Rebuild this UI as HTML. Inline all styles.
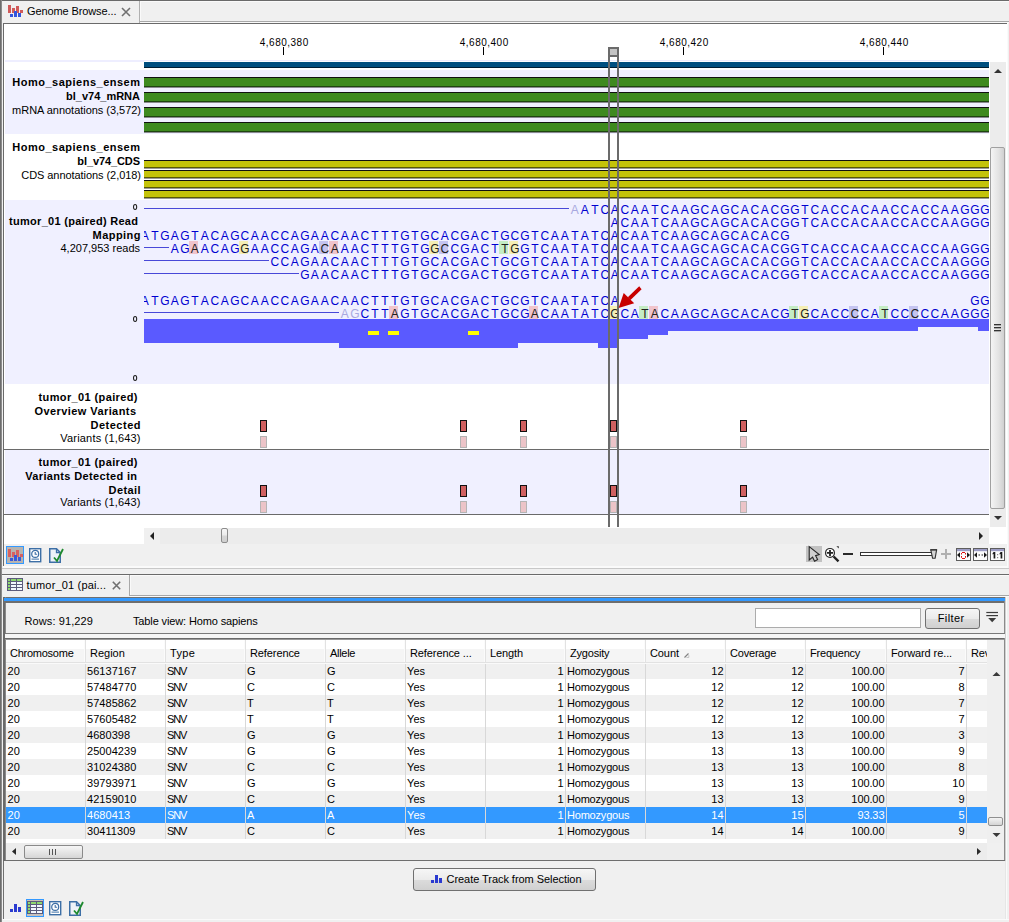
<!DOCTYPE html><html><head><meta charset="utf-8"><style>
html,body{margin:0;padding:0;}
body{width:1009px;height:922px;overflow:hidden;position:relative;background:#f0f0f0;font-family:"Liberation Sans",sans-serif;}
div{position:absolute;box-sizing:border-box;}
.t{white-space:nowrap;}
.b{width:12px;text-align:center;font-size:12px;line-height:12px;}
svg{position:absolute;}
</style></head><body>
<div style="left:0px;top:0px;width:1009px;height:1px;background:#6a6a6a"></div>
<div style="left:0px;top:0px;width:2px;height:922px;background:linear-gradient(90deg,#5e5e5e,#9a9a9a)"></div>
<div style="left:140px;top:1px;width:869px;height:1px;background:#fafafa"></div>
<div style="left:140px;top:1px;width:1px;height:21px;background:#fafafa"></div>
<div style="left:139px;top:1px;width:1px;height:22px;background:#b0b0b0"></div>
<div style="left:140px;top:21px;width:869px;height:1px;background:#a8a8a8"></div>
<div style="left:140px;top:22px;width:869px;height:1px;background:#fafafa"></div>
<svg style="left:8px;top:5px" width="16" height="13" viewBox="0 0 16 13"><rect x="0" y="0" width="3" height="8" fill="#d05a5a"/><rect x="4" y="3" width="3" height="5" fill="#d05a5a"/><rect x="8" y="1" width="3" height="7" fill="#d05a5a"/><rect x="12" y="5" width="3" height="3" fill="#d05a5a"/><rect x="2" y="9" width="3" height="3" fill="#3355dd"/><rect x="6" y="6" width="3" height="6" fill="#3355dd"/><rect x="10" y="8" width="3" height="4" fill="#3355dd"/></svg>
<div class="t" style="left:27px;top:0.19px;font-size:11px;line-height:22px;font-weight:normal;color:#000;letter-spacing:-0.11px;">Genome Browse...</div>
<svg style="left:121px;top:6.5px" width="10" height="10" viewBox="0 0 10 10"><path d="M1 1L9 9M9 1L1 9" stroke="#707070" stroke-width="1.6"/></svg>
<div style="left:3px;top:23px;width:1004px;height:1px;background:#6a6a6a"></div>
<div style="left:3px;top:23px;width:1px;height:544px;background:#6a6a6a"></div>
<div style="left:4px;top:24px;width:1003px;height:520px;background:#fff"></div>
<div style="left:1007px;top:22px;width:1px;height:546px;background:#fafafa"></div>
<div class="t" style="left:84.25px;width:400px;text-align:center;top:32.53px;font-size:10px;line-height:20px;font-weight:normal;color:#000;letter-spacing:0.5px;">4,680,380</div>
<div style="left:283px;top:47px;width:1px;height:8px;background:#000"></div>
<div class="t" style="left:284.25px;width:400px;text-align:center;top:32.53px;font-size:10px;line-height:20px;font-weight:normal;color:#000;letter-spacing:0.5px;">4,680,400</div>
<div style="left:483px;top:47px;width:1px;height:8px;background:#000"></div>
<div class="t" style="left:484.25px;width:400px;text-align:center;top:32.53px;font-size:10px;line-height:20px;font-weight:normal;color:#000;letter-spacing:0.5px;">4,680,420</div>
<div style="left:683px;top:47px;width:1px;height:8px;background:#000"></div>
<div class="t" style="left:684.25px;width:400px;text-align:center;top:32.53px;font-size:10px;line-height:20px;font-weight:normal;color:#000;letter-spacing:0.5px;">4,680,440</div>
<div style="left:883px;top:47px;width:1px;height:8px;background:#000"></div>
<div style="left:5px;top:60px;width:984px;height:1px;background:#eeeeff"></div>
<div style="left:5px;top:61px;width:139px;height:1px;background:#eeeeff"></div>
<div style="left:144px;top:62px;width:845px;height:5px;background:#004f80"></div>
<div style="left:144px;top:67px;width:845px;height:1px;background:#001e33"></div>
<div style="left:5px;top:70px;width:984px;height:64px;background:#f0f0ff"></div>
<div style="left:144px;top:77px;width:845px;height:1px;background:#111"></div>
<div style="left:144px;top:78px;width:845px;height:8px;background:#3e8a1f"></div>
<div style="left:144px;top:86px;width:845px;height:1px;background:#1e4510"></div>
<div style="left:144px;top:87px;width:845px;height:1px;background:#8a8a90"></div>
<div style="left:144px;top:92px;width:845px;height:1px;background:#111"></div>
<div style="left:144px;top:93px;width:845px;height:8px;background:#3e8a1f"></div>
<div style="left:144px;top:101px;width:845px;height:1px;background:#1e4510"></div>
<div style="left:144px;top:102px;width:845px;height:1px;background:#8a8a90"></div>
<div style="left:144px;top:107px;width:845px;height:1px;background:#111"></div>
<div style="left:144px;top:108px;width:845px;height:8px;background:#3e8a1f"></div>
<div style="left:144px;top:116px;width:845px;height:1px;background:#1e4510"></div>
<div style="left:144px;top:117px;width:845px;height:1px;background:#8a8a90"></div>
<div style="left:144px;top:122px;width:845px;height:1px;background:#111"></div>
<div style="left:144px;top:123px;width:845px;height:8px;background:#3e8a1f"></div>
<div style="left:144px;top:131px;width:845px;height:1px;background:#1e4510"></div>
<div style="left:144px;top:132px;width:845px;height:1px;background:#8a8a90"></div>
<div class="t" style="right:868.50px;top:70.69px;font-size:11px;line-height:22px;font-weight:bold;color:#000;text-align:right;letter-spacing:0.5px;">Homo_sapiens_ensem</div>
<div class="t" style="right:869.00px;top:84.69px;font-size:11px;line-height:22px;font-weight:bold;color:#000;text-align:right;">bl_v74_mRNA</div>
<div class="t" style="right:868.03px;top:98.69px;font-size:11px;line-height:22px;font-weight:normal;color:#000;text-align:right;letter-spacing:-0.03px;">mRNA annotations (3,572)</div>
<div style="left:144px;top:160px;width:845px;height:1px;background:#111"></div>
<div style="left:144px;top:161px;width:845px;height:6px;background:#c4c30a"></div>
<div style="left:144px;top:167px;width:845px;height:1px;background:#5a5a05"></div>
<div style="left:144px;top:168px;width:845px;height:1px;background:#9a9a9a"></div>
<div style="left:144px;top:170px;width:845px;height:1px;background:#111"></div>
<div style="left:144px;top:171px;width:845px;height:6px;background:#c4c30a"></div>
<div style="left:144px;top:177px;width:845px;height:1px;background:#5a5a05"></div>
<div style="left:144px;top:178px;width:845px;height:1px;background:#9a9a9a"></div>
<div style="left:144px;top:180px;width:845px;height:1px;background:#111"></div>
<div style="left:144px;top:181px;width:845px;height:6px;background:#c4c30a"></div>
<div style="left:144px;top:187px;width:845px;height:1px;background:#5a5a05"></div>
<div style="left:144px;top:188px;width:845px;height:1px;background:#9a9a9a"></div>
<div style="left:144px;top:190px;width:845px;height:1px;background:#111"></div>
<div style="left:144px;top:191px;width:845px;height:6px;background:#c4c30a"></div>
<div style="left:144px;top:197px;width:845px;height:1px;background:#5a5a05"></div>
<div style="left:144px;top:198px;width:845px;height:1px;background:#9a9a9a"></div>
<div class="t" style="right:868.50px;top:135.69px;font-size:11px;line-height:22px;font-weight:bold;color:#000;text-align:right;letter-spacing:0.5px;">Homo_sapiens_ensem</div>
<div class="t" style="right:869.10px;top:149.69px;font-size:11px;line-height:22px;font-weight:bold;color:#000;text-align:right;letter-spacing:-0.1px;">bl_v74_CDS</div>
<div class="t" style="right:868.06px;top:163.69px;font-size:11px;line-height:22px;font-weight:normal;color:#000;text-align:right;letter-spacing:-0.06px;">CDS annotations (2,018)</div>
<div style="left:5px;top:200px;width:984px;height:184px;background:#f0f0ff"></div>
<div class="t" style="right:870.71px;top:210.19px;font-size:11px;line-height:22px;font-weight:bold;color:#000;text-align:right;letter-spacing:0.29px;">tumor_01 (paired) Read</div>
<div class="t" style="right:868.05px;top:223.69px;font-size:11px;line-height:22px;font-weight:bold;color:#000;text-align:right;letter-spacing:0.45px;">Mapping</div>
<div class="t" style="right:869.00px;top:237.19px;font-size:11px;line-height:22px;font-weight:normal;color:#000;text-align:right;">4,207,953 reads</div>
<svg style="left:130px;top:202.2px" width="10" height="10" viewBox="130 202.2 10 10"><ellipse cx="135.1" cy="207.2" rx="1.6" ry="2.45" fill="none" stroke="#202020" stroke-width="1.05"/></svg>
<svg style="left:130px;top:314.2px" width="10" height="10" viewBox="130 314.2 10 10"><ellipse cx="135.1" cy="319.2" rx="1.6" ry="2.45" fill="none" stroke="#202020" stroke-width="1.05"/></svg>
<svg style="left:130px;top:373.2px" width="10" height="10" viewBox="130 373.2 10 10"><ellipse cx="135.1" cy="378.2" rx="1.6" ry="2.45" fill="none" stroke="#202020" stroke-width="1.05"/></svg>
<div style="left:0;top:0;width:989px;height:922px;overflow:hidden;clip-path:inset(0 0 0 144px)"><div style="left:144px;top:208px;width:425px;height:1px;background:#4848d8"></div><div class="b" style="left:568.8px;top:204px;color:#a8a8e0">A</div><div class="b" style="left:578.8px;top:204px;color:#0000d0">A</div><div class="b" style="left:588.8px;top:204px;color:#0000d0">T</div><div class="b" style="left:598.8px;top:204px;color:#0000d0">C</div><div class="b" style="left:608.8px;top:204px;color:#0000d0">A</div><div class="b" style="left:618.8px;top:204px;color:#0000d0">C</div><div class="b" style="left:628.8px;top:204px;color:#0000d0">A</div><div class="b" style="left:638.8px;top:204px;color:#0000d0">A</div><div class="b" style="left:648.8px;top:204px;color:#0000d0">T</div><div class="b" style="left:658.8px;top:204px;color:#0000d0">C</div><div class="b" style="left:668.8px;top:204px;color:#0000d0">A</div><div class="b" style="left:678.8px;top:204px;color:#0000d0">A</div><div class="b" style="left:688.8px;top:204px;color:#0000d0">G</div><div class="b" style="left:698.8px;top:204px;color:#0000d0">C</div><div class="b" style="left:708.8px;top:204px;color:#0000d0">A</div><div class="b" style="left:718.8px;top:204px;color:#0000d0">G</div><div class="b" style="left:728.8px;top:204px;color:#0000d0">C</div><div class="b" style="left:738.8px;top:204px;color:#0000d0">A</div><div class="b" style="left:748.8px;top:204px;color:#0000d0">C</div><div class="b" style="left:758.8px;top:204px;color:#0000d0">A</div><div class="b" style="left:768.8px;top:204px;color:#0000d0">C</div><div class="b" style="left:778.8px;top:204px;color:#0000d0">G</div><div class="b" style="left:788.8px;top:204px;color:#0000d0">G</div><div class="b" style="left:798.8px;top:204px;color:#0000d0">T</div><div class="b" style="left:808.8px;top:204px;color:#0000d0">C</div><div class="b" style="left:818.8px;top:204px;color:#0000d0">A</div><div class="b" style="left:828.8px;top:204px;color:#0000d0">C</div><div class="b" style="left:838.8px;top:204px;color:#0000d0">C</div><div class="b" style="left:848.8px;top:204px;color:#0000d0">A</div><div class="b" style="left:858.8px;top:204px;color:#0000d0">C</div><div class="b" style="left:868.8px;top:204px;color:#0000d0">A</div><div class="b" style="left:878.8px;top:204px;color:#0000d0">A</div><div class="b" style="left:888.8px;top:204px;color:#0000d0">C</div><div class="b" style="left:898.8px;top:204px;color:#0000d0">C</div><div class="b" style="left:908.8px;top:204px;color:#0000d0">A</div><div class="b" style="left:918.8px;top:204px;color:#0000d0">C</div><div class="b" style="left:928.8px;top:204px;color:#0000d0">C</div><div class="b" style="left:938.8px;top:204px;color:#0000d0">A</div><div class="b" style="left:948.8px;top:204px;color:#0000d0">A</div><div class="b" style="left:958.8px;top:204px;color:#0000d0">G</div><div class="b" style="left:968.8px;top:204px;color:#0000d0">G</div><div class="b" style="left:978.8px;top:204px;color:#0000d0">G</div><div class="b" style="left:608.8px;top:217px;color:#0000d0">A</div><div class="b" style="left:618.8px;top:217px;color:#0000d0">C</div><div class="b" style="left:628.8px;top:217px;color:#0000d0">A</div><div class="b" style="left:638.8px;top:217px;color:#0000d0">A</div><div class="b" style="left:648.8px;top:217px;color:#0000d0">T</div><div class="b" style="left:658.8px;top:217px;color:#0000d0">C</div><div class="b" style="left:668.8px;top:217px;color:#0000d0">A</div><div class="b" style="left:678.8px;top:217px;color:#0000d0">A</div><div class="b" style="left:688.8px;top:217px;color:#0000d0">G</div><div class="b" style="left:698.8px;top:217px;color:#0000d0">C</div><div class="b" style="left:708.8px;top:217px;color:#0000d0">A</div><div class="b" style="left:718.8px;top:217px;color:#0000d0">G</div><div class="b" style="left:728.8px;top:217px;color:#0000d0">C</div><div class="b" style="left:738.8px;top:217px;color:#0000d0">A</div><div class="b" style="left:748.8px;top:217px;color:#0000d0">C</div><div class="b" style="left:758.8px;top:217px;color:#0000d0">A</div><div class="b" style="left:768.8px;top:217px;color:#0000d0">C</div><div class="b" style="left:778.8px;top:217px;color:#0000d0">G</div><div class="b" style="left:788.8px;top:217px;color:#0000d0">G</div><div class="b" style="left:798.8px;top:217px;color:#0000d0">T</div><div class="b" style="left:808.8px;top:217px;color:#0000d0">C</div><div class="b" style="left:818.8px;top:217px;color:#0000d0">A</div><div class="b" style="left:828.8px;top:217px;color:#0000d0">C</div><div class="b" style="left:838.8px;top:217px;color:#0000d0">C</div><div class="b" style="left:848.8px;top:217px;color:#0000d0">A</div><div class="b" style="left:858.8px;top:217px;color:#0000d0">C</div><div class="b" style="left:868.8px;top:217px;color:#0000d0">A</div><div class="b" style="left:878.8px;top:217px;color:#0000d0">A</div><div class="b" style="left:888.8px;top:217px;color:#0000d0">C</div><div class="b" style="left:898.8px;top:217px;color:#0000d0">C</div><div class="b" style="left:908.8px;top:217px;color:#0000d0">A</div><div class="b" style="left:918.8px;top:217px;color:#0000d0">C</div><div class="b" style="left:928.8px;top:217px;color:#0000d0">C</div><div class="b" style="left:938.8px;top:217px;color:#0000d0">A</div><div class="b" style="left:948.8px;top:217px;color:#0000d0">A</div><div class="b" style="left:958.8px;top:217px;color:#0000d0">G</div><div class="b" style="left:968.8px;top:217px;color:#0000d0">G</div><div class="b" style="left:978.8px;top:217px;color:#0000d0">G</div><div class="b" style="left:138.8px;top:230px;color:#0000d0">A</div><div class="b" style="left:148.8px;top:230px;color:#0000d0">T</div><div class="b" style="left:158.8px;top:230px;color:#0000d0">G</div><div class="b" style="left:168.8px;top:230px;color:#0000d0">A</div><div class="b" style="left:178.8px;top:230px;color:#0000d0">G</div><div class="b" style="left:188.8px;top:230px;color:#0000d0">T</div><div class="b" style="left:198.8px;top:230px;color:#0000d0">A</div><div class="b" style="left:208.8px;top:230px;color:#0000d0">C</div><div class="b" style="left:218.8px;top:230px;color:#0000d0">A</div><div class="b" style="left:228.8px;top:230px;color:#0000d0">G</div><div class="b" style="left:238.8px;top:230px;color:#0000d0">C</div><div class="b" style="left:248.8px;top:230px;color:#0000d0">A</div><div class="b" style="left:258.8px;top:230px;color:#0000d0">A</div><div class="b" style="left:268.8px;top:230px;color:#0000d0">C</div><div class="b" style="left:278.8px;top:230px;color:#0000d0">C</div><div class="b" style="left:288.8px;top:230px;color:#0000d0">A</div><div class="b" style="left:298.8px;top:230px;color:#0000d0">G</div><div class="b" style="left:308.8px;top:230px;color:#0000d0">A</div><div class="b" style="left:318.8px;top:230px;color:#0000d0">A</div><div class="b" style="left:328.8px;top:230px;color:#0000d0">C</div><div class="b" style="left:338.8px;top:230px;color:#0000d0">A</div><div class="b" style="left:348.8px;top:230px;color:#0000d0">A</div><div class="b" style="left:358.8px;top:230px;color:#0000d0">C</div><div class="b" style="left:368.8px;top:230px;color:#0000d0">T</div><div class="b" style="left:378.8px;top:230px;color:#0000d0">T</div><div class="b" style="left:388.8px;top:230px;color:#0000d0">T</div><div class="b" style="left:398.8px;top:230px;color:#0000d0">G</div><div class="b" style="left:408.8px;top:230px;color:#0000d0">T</div><div class="b" style="left:418.8px;top:230px;color:#0000d0">G</div><div class="b" style="left:428.8px;top:230px;color:#0000d0">C</div><div class="b" style="left:438.8px;top:230px;color:#0000d0">A</div><div class="b" style="left:448.8px;top:230px;color:#0000d0">C</div><div class="b" style="left:458.8px;top:230px;color:#0000d0">G</div><div class="b" style="left:468.8px;top:230px;color:#0000d0">A</div><div class="b" style="left:478.8px;top:230px;color:#0000d0">C</div><div class="b" style="left:488.8px;top:230px;color:#0000d0">T</div><div class="b" style="left:498.8px;top:230px;color:#0000d0">G</div><div class="b" style="left:508.8px;top:230px;color:#0000d0">C</div><div class="b" style="left:518.8px;top:230px;color:#0000d0">G</div><div class="b" style="left:528.8px;top:230px;color:#0000d0">T</div><div class="b" style="left:538.8px;top:230px;color:#0000d0">C</div><div class="b" style="left:548.8px;top:230px;color:#0000d0">A</div><div class="b" style="left:558.8px;top:230px;color:#0000d0">A</div><div class="b" style="left:568.8px;top:230px;color:#0000d0">T</div><div class="b" style="left:578.8px;top:230px;color:#0000d0">A</div><div class="b" style="left:588.8px;top:230px;color:#0000d0">T</div><div class="b" style="left:598.8px;top:230px;color:#0000d0">C</div><div class="b" style="left:608.8px;top:230px;color:#0000d0">A</div><div class="b" style="left:618.8px;top:230px;color:#0000d0">C</div><div class="b" style="left:628.8px;top:230px;color:#0000d0">A</div><div class="b" style="left:638.8px;top:230px;color:#0000d0">A</div><div class="b" style="left:648.8px;top:230px;color:#0000d0">T</div><div class="b" style="left:658.8px;top:230px;color:#0000d0">C</div><div class="b" style="left:668.8px;top:230px;color:#0000d0">A</div><div class="b" style="left:678.8px;top:230px;color:#0000d0">A</div><div class="b" style="left:688.8px;top:230px;color:#0000d0">G</div><div class="b" style="left:698.8px;top:230px;color:#0000d0">C</div><div class="b" style="left:708.8px;top:230px;color:#0000d0">A</div><div class="b" style="left:718.8px;top:230px;color:#0000d0">G</div><div class="b" style="left:728.8px;top:230px;color:#0000d0">C</div><div class="b" style="left:738.8px;top:230px;color:#0000d0">A</div><div class="b" style="left:748.8px;top:230px;color:#0000d0">C</div><div class="b" style="left:758.8px;top:230px;color:#0000d0">A</div><div class="b" style="left:768.8px;top:230px;color:#0000d0">C</div><div class="b" style="left:778.8px;top:230px;color:#0000d0">G</div><div style="left:144px;top:247px;width:25px;height:1px;background:#4848d8"></div><div class="b" style="left:168.8px;top:243px;color:#0000d0">A</div><div class="b" style="left:178.8px;top:243px;color:#0000d0">G</div><div style="left:189px;top:241px;width:9px;height:13px;background:#f0c4cc"></div><div class="b" style="left:188.8px;top:243px;color:#202020">A</div><div class="b" style="left:198.8px;top:243px;color:#0000d0">A</div><div class="b" style="left:208.8px;top:243px;color:#0000d0">C</div><div class="b" style="left:218.8px;top:243px;color:#0000d0">A</div><div class="b" style="left:228.8px;top:243px;color:#0000d0">G</div><div style="left:239px;top:241px;width:9px;height:13px;background:#f4eeb4"></div><div class="b" style="left:238.8px;top:243px;color:#202020">G</div><div class="b" style="left:248.8px;top:243px;color:#0000d0">A</div><div class="b" style="left:258.8px;top:243px;color:#0000d0">A</div><div class="b" style="left:268.8px;top:243px;color:#0000d0">C</div><div class="b" style="left:278.8px;top:243px;color:#0000d0">C</div><div class="b" style="left:288.8px;top:243px;color:#0000d0">A</div><div class="b" style="left:298.8px;top:243px;color:#0000d0">G</div><div class="b" style="left:308.8px;top:243px;color:#0000d0">A</div><div style="left:319px;top:241px;width:9px;height:13px;background:#c4c4f0"></div><div class="b" style="left:318.8px;top:243px;color:#202020">C</div><div style="left:329px;top:241px;width:9px;height:13px;background:#f0c4cc"></div><div class="b" style="left:328.8px;top:243px;color:#202020">A</div><div class="b" style="left:338.8px;top:243px;color:#0000d0">A</div><div class="b" style="left:348.8px;top:243px;color:#0000d0">A</div><div class="b" style="left:358.8px;top:243px;color:#0000d0">C</div><div class="b" style="left:368.8px;top:243px;color:#0000d0">T</div><div class="b" style="left:378.8px;top:243px;color:#0000d0">T</div><div class="b" style="left:388.8px;top:243px;color:#0000d0">T</div><div class="b" style="left:398.8px;top:243px;color:#0000d0">G</div><div class="b" style="left:408.8px;top:243px;color:#0000d0">T</div><div class="b" style="left:418.8px;top:243px;color:#0000d0">G</div><div style="left:429px;top:241px;width:9px;height:13px;background:#f4eeb4"></div><div class="b" style="left:428.8px;top:243px;color:#202020">G</div><div style="left:439px;top:241px;width:9px;height:13px;background:#c4c4f0"></div><div class="b" style="left:438.8px;top:243px;color:#202020">C</div><div class="b" style="left:448.8px;top:243px;color:#0000d0">C</div><div class="b" style="left:458.8px;top:243px;color:#0000d0">G</div><div class="b" style="left:468.8px;top:243px;color:#0000d0">A</div><div class="b" style="left:478.8px;top:243px;color:#0000d0">C</div><div class="b" style="left:488.8px;top:243px;color:#0000d0">T</div><div style="left:499px;top:241px;width:9px;height:13px;background:#c4ecc4"></div><div class="b" style="left:498.8px;top:243px;color:#202020">T</div><div style="left:509px;top:241px;width:9px;height:13px;background:#f4eeb4"></div><div class="b" style="left:508.8px;top:243px;color:#202020">G</div><div class="b" style="left:518.8px;top:243px;color:#0000d0">G</div><div class="b" style="left:528.8px;top:243px;color:#0000d0">T</div><div class="b" style="left:538.8px;top:243px;color:#0000d0">C</div><div class="b" style="left:548.8px;top:243px;color:#0000d0">A</div><div class="b" style="left:558.8px;top:243px;color:#0000d0">A</div><div class="b" style="left:568.8px;top:243px;color:#0000d0">T</div><div class="b" style="left:578.8px;top:243px;color:#0000d0">A</div><div class="b" style="left:588.8px;top:243px;color:#0000d0">T</div><div class="b" style="left:598.8px;top:243px;color:#0000d0">C</div><div class="b" style="left:608.8px;top:243px;color:#0000d0">A</div><div class="b" style="left:618.8px;top:243px;color:#0000d0">C</div><div class="b" style="left:628.8px;top:243px;color:#0000d0">A</div><div class="b" style="left:638.8px;top:243px;color:#0000d0">A</div><div class="b" style="left:648.8px;top:243px;color:#0000d0">T</div><div class="b" style="left:658.8px;top:243px;color:#0000d0">C</div><div class="b" style="left:668.8px;top:243px;color:#0000d0">A</div><div class="b" style="left:678.8px;top:243px;color:#0000d0">A</div><div class="b" style="left:688.8px;top:243px;color:#0000d0">G</div><div class="b" style="left:698.8px;top:243px;color:#0000d0">C</div><div class="b" style="left:708.8px;top:243px;color:#0000d0">A</div><div class="b" style="left:718.8px;top:243px;color:#0000d0">G</div><div class="b" style="left:728.8px;top:243px;color:#0000d0">C</div><div class="b" style="left:738.8px;top:243px;color:#0000d0">A</div><div class="b" style="left:748.8px;top:243px;color:#0000d0">C</div><div class="b" style="left:758.8px;top:243px;color:#0000d0">A</div><div class="b" style="left:768.8px;top:243px;color:#0000d0">C</div><div class="b" style="left:778.8px;top:243px;color:#0000d0">G</div><div class="b" style="left:788.8px;top:243px;color:#0000d0">G</div><div class="b" style="left:798.8px;top:243px;color:#0000d0">T</div><div class="b" style="left:808.8px;top:243px;color:#0000d0">C</div><div class="b" style="left:818.8px;top:243px;color:#0000d0">A</div><div class="b" style="left:828.8px;top:243px;color:#0000d0">C</div><div class="b" style="left:838.8px;top:243px;color:#0000d0">C</div><div class="b" style="left:848.8px;top:243px;color:#0000d0">A</div><div class="b" style="left:858.8px;top:243px;color:#0000d0">C</div><div class="b" style="left:868.8px;top:243px;color:#0000d0">A</div><div class="b" style="left:878.8px;top:243px;color:#0000d0">A</div><div class="b" style="left:888.8px;top:243px;color:#0000d0">C</div><div class="b" style="left:898.8px;top:243px;color:#0000d0">C</div><div class="b" style="left:908.8px;top:243px;color:#0000d0">A</div><div class="b" style="left:918.8px;top:243px;color:#0000d0">C</div><div class="b" style="left:928.8px;top:243px;color:#0000d0">C</div><div class="b" style="left:938.8px;top:243px;color:#0000d0">A</div><div class="b" style="left:948.8px;top:243px;color:#0000d0">A</div><div class="b" style="left:958.8px;top:243px;color:#0000d0">G</div><div class="b" style="left:968.8px;top:243px;color:#0000d0">G</div><div class="b" style="left:978.8px;top:243px;color:#0000d0">G</div><div style="left:144px;top:260px;width:125px;height:1px;background:#4848d8"></div><div class="b" style="left:268.8px;top:256px;color:#0000d0">C</div><div class="b" style="left:278.8px;top:256px;color:#0000d0">C</div><div class="b" style="left:288.8px;top:256px;color:#0000d0">A</div><div class="b" style="left:298.8px;top:256px;color:#0000d0">G</div><div class="b" style="left:308.8px;top:256px;color:#0000d0">A</div><div class="b" style="left:318.8px;top:256px;color:#0000d0">A</div><div class="b" style="left:328.8px;top:256px;color:#0000d0">C</div><div class="b" style="left:338.8px;top:256px;color:#0000d0">A</div><div class="b" style="left:348.8px;top:256px;color:#0000d0">A</div><div class="b" style="left:358.8px;top:256px;color:#0000d0">C</div><div class="b" style="left:368.8px;top:256px;color:#0000d0">T</div><div class="b" style="left:378.8px;top:256px;color:#0000d0">T</div><div class="b" style="left:388.8px;top:256px;color:#0000d0">T</div><div class="b" style="left:398.8px;top:256px;color:#0000d0">G</div><div class="b" style="left:408.8px;top:256px;color:#0000d0">T</div><div class="b" style="left:418.8px;top:256px;color:#0000d0">G</div><div class="b" style="left:428.8px;top:256px;color:#0000d0">C</div><div class="b" style="left:438.8px;top:256px;color:#0000d0">A</div><div class="b" style="left:448.8px;top:256px;color:#0000d0">C</div><div class="b" style="left:458.8px;top:256px;color:#0000d0">G</div><div class="b" style="left:468.8px;top:256px;color:#0000d0">A</div><div class="b" style="left:478.8px;top:256px;color:#0000d0">C</div><div class="b" style="left:488.8px;top:256px;color:#0000d0">T</div><div class="b" style="left:498.8px;top:256px;color:#0000d0">G</div><div class="b" style="left:508.8px;top:256px;color:#0000d0">C</div><div class="b" style="left:518.8px;top:256px;color:#0000d0">G</div><div class="b" style="left:528.8px;top:256px;color:#0000d0">T</div><div class="b" style="left:538.8px;top:256px;color:#0000d0">C</div><div class="b" style="left:548.8px;top:256px;color:#0000d0">A</div><div class="b" style="left:558.8px;top:256px;color:#0000d0">A</div><div class="b" style="left:568.8px;top:256px;color:#0000d0">T</div><div class="b" style="left:578.8px;top:256px;color:#0000d0">A</div><div class="b" style="left:588.8px;top:256px;color:#0000d0">T</div><div class="b" style="left:598.8px;top:256px;color:#0000d0">C</div><div class="b" style="left:608.8px;top:256px;color:#0000d0">A</div><div class="b" style="left:618.8px;top:256px;color:#0000d0">C</div><div class="b" style="left:628.8px;top:256px;color:#0000d0">A</div><div class="b" style="left:638.8px;top:256px;color:#0000d0">A</div><div class="b" style="left:648.8px;top:256px;color:#0000d0">T</div><div class="b" style="left:658.8px;top:256px;color:#0000d0">C</div><div class="b" style="left:668.8px;top:256px;color:#0000d0">A</div><div class="b" style="left:678.8px;top:256px;color:#0000d0">A</div><div class="b" style="left:688.8px;top:256px;color:#0000d0">G</div><div class="b" style="left:698.8px;top:256px;color:#0000d0">C</div><div class="b" style="left:708.8px;top:256px;color:#0000d0">A</div><div class="b" style="left:718.8px;top:256px;color:#0000d0">G</div><div class="b" style="left:728.8px;top:256px;color:#0000d0">C</div><div class="b" style="left:738.8px;top:256px;color:#0000d0">A</div><div class="b" style="left:748.8px;top:256px;color:#0000d0">C</div><div class="b" style="left:758.8px;top:256px;color:#0000d0">A</div><div class="b" style="left:768.8px;top:256px;color:#0000d0">C</div><div class="b" style="left:778.8px;top:256px;color:#0000d0">G</div><div class="b" style="left:788.8px;top:256px;color:#0000d0">G</div><div class="b" style="left:798.8px;top:256px;color:#0000d0">T</div><div class="b" style="left:808.8px;top:256px;color:#0000d0">C</div><div class="b" style="left:818.8px;top:256px;color:#0000d0">A</div><div class="b" style="left:828.8px;top:256px;color:#0000d0">C</div><div class="b" style="left:838.8px;top:256px;color:#0000d0">C</div><div class="b" style="left:848.8px;top:256px;color:#0000d0">A</div><div class="b" style="left:858.8px;top:256px;color:#0000d0">C</div><div class="b" style="left:868.8px;top:256px;color:#0000d0">A</div><div class="b" style="left:878.8px;top:256px;color:#0000d0">A</div><div class="b" style="left:888.8px;top:256px;color:#0000d0">C</div><div class="b" style="left:898.8px;top:256px;color:#0000d0">C</div><div class="b" style="left:908.8px;top:256px;color:#0000d0">A</div><div class="b" style="left:918.8px;top:256px;color:#0000d0">C</div><div class="b" style="left:928.8px;top:256px;color:#0000d0">C</div><div class="b" style="left:938.8px;top:256px;color:#0000d0">A</div><div class="b" style="left:948.8px;top:256px;color:#0000d0">A</div><div class="b" style="left:958.8px;top:256px;color:#0000d0">G</div><div class="b" style="left:968.8px;top:256px;color:#0000d0">G</div><div class="b" style="left:978.8px;top:256px;color:#0000d0">G</div><div style="left:144px;top:273px;width:155px;height:1px;background:#4848d8"></div><div class="b" style="left:298.8px;top:269px;color:#0000d0">G</div><div class="b" style="left:308.8px;top:269px;color:#0000d0">A</div><div class="b" style="left:318.8px;top:269px;color:#0000d0">A</div><div class="b" style="left:328.8px;top:269px;color:#0000d0">C</div><div class="b" style="left:338.8px;top:269px;color:#0000d0">A</div><div class="b" style="left:348.8px;top:269px;color:#0000d0">A</div><div class="b" style="left:358.8px;top:269px;color:#0000d0">C</div><div class="b" style="left:368.8px;top:269px;color:#0000d0">T</div><div class="b" style="left:378.8px;top:269px;color:#0000d0">T</div><div class="b" style="left:388.8px;top:269px;color:#0000d0">T</div><div class="b" style="left:398.8px;top:269px;color:#0000d0">G</div><div class="b" style="left:408.8px;top:269px;color:#0000d0">T</div><div class="b" style="left:418.8px;top:269px;color:#0000d0">G</div><div class="b" style="left:428.8px;top:269px;color:#0000d0">C</div><div class="b" style="left:438.8px;top:269px;color:#0000d0">A</div><div class="b" style="left:448.8px;top:269px;color:#0000d0">C</div><div class="b" style="left:458.8px;top:269px;color:#0000d0">G</div><div class="b" style="left:468.8px;top:269px;color:#0000d0">A</div><div class="b" style="left:478.8px;top:269px;color:#0000d0">C</div><div class="b" style="left:488.8px;top:269px;color:#0000d0">T</div><div class="b" style="left:498.8px;top:269px;color:#0000d0">G</div><div class="b" style="left:508.8px;top:269px;color:#0000d0">C</div><div class="b" style="left:518.8px;top:269px;color:#0000d0">G</div><div class="b" style="left:528.8px;top:269px;color:#0000d0">T</div><div class="b" style="left:538.8px;top:269px;color:#0000d0">C</div><div class="b" style="left:548.8px;top:269px;color:#0000d0">A</div><div class="b" style="left:558.8px;top:269px;color:#0000d0">A</div><div class="b" style="left:568.8px;top:269px;color:#0000d0">T</div><div class="b" style="left:578.8px;top:269px;color:#0000d0">A</div><div class="b" style="left:588.8px;top:269px;color:#0000d0">T</div><div class="b" style="left:598.8px;top:269px;color:#0000d0">C</div><div class="b" style="left:608.8px;top:269px;color:#0000d0">A</div><div class="b" style="left:618.8px;top:269px;color:#0000d0">C</div><div class="b" style="left:628.8px;top:269px;color:#0000d0">A</div><div class="b" style="left:638.8px;top:269px;color:#0000d0">A</div><div class="b" style="left:648.8px;top:269px;color:#0000d0">T</div><div class="b" style="left:658.8px;top:269px;color:#0000d0">C</div><div class="b" style="left:668.8px;top:269px;color:#0000d0">A</div><div class="b" style="left:678.8px;top:269px;color:#0000d0">A</div><div class="b" style="left:688.8px;top:269px;color:#0000d0">G</div><div class="b" style="left:698.8px;top:269px;color:#0000d0">C</div><div class="b" style="left:708.8px;top:269px;color:#0000d0">A</div><div class="b" style="left:718.8px;top:269px;color:#0000d0">G</div><div class="b" style="left:728.8px;top:269px;color:#0000d0">C</div><div class="b" style="left:738.8px;top:269px;color:#0000d0">A</div><div class="b" style="left:748.8px;top:269px;color:#0000d0">C</div><div class="b" style="left:758.8px;top:269px;color:#0000d0">A</div><div class="b" style="left:768.8px;top:269px;color:#0000d0">C</div><div class="b" style="left:778.8px;top:269px;color:#0000d0">G</div><div class="b" style="left:788.8px;top:269px;color:#0000d0">G</div><div class="b" style="left:798.8px;top:269px;color:#0000d0">T</div><div class="b" style="left:808.8px;top:269px;color:#0000d0">C</div><div class="b" style="left:818.8px;top:269px;color:#0000d0">A</div><div class="b" style="left:828.8px;top:269px;color:#0000d0">C</div><div class="b" style="left:838.8px;top:269px;color:#0000d0">C</div><div class="b" style="left:848.8px;top:269px;color:#0000d0">A</div><div class="b" style="left:858.8px;top:269px;color:#0000d0">C</div><div class="b" style="left:868.8px;top:269px;color:#0000d0">A</div><div class="b" style="left:878.8px;top:269px;color:#0000d0">A</div><div class="b" style="left:888.8px;top:269px;color:#0000d0">C</div><div class="b" style="left:898.8px;top:269px;color:#0000d0">C</div><div class="b" style="left:908.8px;top:269px;color:#0000d0">A</div><div class="b" style="left:918.8px;top:269px;color:#0000d0">C</div><div class="b" style="left:928.8px;top:269px;color:#0000d0">C</div><div class="b" style="left:938.8px;top:269px;color:#0000d0">A</div><div class="b" style="left:948.8px;top:269px;color:#0000d0">A</div><div class="b" style="left:958.8px;top:269px;color:#0000d0">G</div><div class="b" style="left:968.8px;top:269px;color:#0000d0">G</div><div class="b" style="left:978.8px;top:269px;color:#0000d0">G</div><div class="b" style="left:138.8px;top:295px;color:#0000d0">A</div><div class="b" style="left:148.8px;top:295px;color:#0000d0">T</div><div class="b" style="left:158.8px;top:295px;color:#0000d0">G</div><div class="b" style="left:168.8px;top:295px;color:#0000d0">A</div><div class="b" style="left:178.8px;top:295px;color:#0000d0">G</div><div class="b" style="left:188.8px;top:295px;color:#0000d0">T</div><div class="b" style="left:198.8px;top:295px;color:#0000d0">A</div><div class="b" style="left:208.8px;top:295px;color:#0000d0">C</div><div class="b" style="left:218.8px;top:295px;color:#0000d0">A</div><div class="b" style="left:228.8px;top:295px;color:#0000d0">G</div><div class="b" style="left:238.8px;top:295px;color:#0000d0">C</div><div class="b" style="left:248.8px;top:295px;color:#0000d0">A</div><div class="b" style="left:258.8px;top:295px;color:#0000d0">A</div><div class="b" style="left:268.8px;top:295px;color:#0000d0">C</div><div class="b" style="left:278.8px;top:295px;color:#0000d0">C</div><div class="b" style="left:288.8px;top:295px;color:#0000d0">A</div><div class="b" style="left:298.8px;top:295px;color:#0000d0">G</div><div class="b" style="left:308.8px;top:295px;color:#0000d0">A</div><div class="b" style="left:318.8px;top:295px;color:#0000d0">A</div><div class="b" style="left:328.8px;top:295px;color:#0000d0">C</div><div class="b" style="left:338.8px;top:295px;color:#0000d0">A</div><div class="b" style="left:348.8px;top:295px;color:#0000d0">A</div><div class="b" style="left:358.8px;top:295px;color:#0000d0">C</div><div class="b" style="left:368.8px;top:295px;color:#0000d0">T</div><div class="b" style="left:378.8px;top:295px;color:#0000d0">T</div><div class="b" style="left:388.8px;top:295px;color:#0000d0">T</div><div class="b" style="left:398.8px;top:295px;color:#0000d0">G</div><div class="b" style="left:408.8px;top:295px;color:#0000d0">T</div><div class="b" style="left:418.8px;top:295px;color:#0000d0">G</div><div class="b" style="left:428.8px;top:295px;color:#0000d0">C</div><div class="b" style="left:438.8px;top:295px;color:#0000d0">A</div><div class="b" style="left:448.8px;top:295px;color:#0000d0">C</div><div class="b" style="left:458.8px;top:295px;color:#0000d0">G</div><div class="b" style="left:468.8px;top:295px;color:#0000d0">A</div><div class="b" style="left:478.8px;top:295px;color:#0000d0">C</div><div class="b" style="left:488.8px;top:295px;color:#0000d0">T</div><div class="b" style="left:498.8px;top:295px;color:#0000d0">G</div><div class="b" style="left:508.8px;top:295px;color:#0000d0">C</div><div class="b" style="left:518.8px;top:295px;color:#0000d0">G</div><div class="b" style="left:528.8px;top:295px;color:#0000d0">T</div><div class="b" style="left:538.8px;top:295px;color:#0000d0">C</div><div class="b" style="left:548.8px;top:295px;color:#0000d0">A</div><div class="b" style="left:558.8px;top:295px;color:#0000d0">A</div><div class="b" style="left:568.8px;top:295px;color:#0000d0">T</div><div class="b" style="left:578.8px;top:295px;color:#0000d0">A</div><div class="b" style="left:588.8px;top:295px;color:#0000d0">T</div><div class="b" style="left:598.8px;top:295px;color:#0000d0">C</div><div class="b" style="left:608.8px;top:295px;color:#0000d0">A</div><div class="b" style="left:968.8px;top:295px;color:#0000d0">G</div><div class="b" style="left:978.8px;top:295px;color:#0000d0">G</div><div style="left:144px;top:312px;width:195px;height:1px;background:#4848d8"></div><div class="b" style="left:338.8px;top:308px;color:#a8a8e0">A</div><div class="b" style="left:348.8px;top:308px;color:#a8a8e0">G</div><div class="b" style="left:358.8px;top:308px;color:#0000d0">C</div><div class="b" style="left:368.8px;top:308px;color:#0000d0">T</div><div class="b" style="left:378.8px;top:308px;color:#0000d0">T</div><div style="left:389px;top:306px;width:9px;height:13px;background:#f0c4cc"></div><div class="b" style="left:388.8px;top:308px;color:#202020">A</div><div class="b" style="left:398.8px;top:308px;color:#0000d0">G</div><div class="b" style="left:408.8px;top:308px;color:#0000d0">T</div><div class="b" style="left:418.8px;top:308px;color:#0000d0">G</div><div class="b" style="left:428.8px;top:308px;color:#0000d0">C</div><div class="b" style="left:438.8px;top:308px;color:#0000d0">A</div><div class="b" style="left:448.8px;top:308px;color:#0000d0">C</div><div class="b" style="left:458.8px;top:308px;color:#0000d0">G</div><div class="b" style="left:468.8px;top:308px;color:#0000d0">A</div><div class="b" style="left:478.8px;top:308px;color:#0000d0">C</div><div class="b" style="left:488.8px;top:308px;color:#0000d0">T</div><div class="b" style="left:498.8px;top:308px;color:#0000d0">G</div><div class="b" style="left:508.8px;top:308px;color:#0000d0">C</div><div class="b" style="left:518.8px;top:308px;color:#0000d0">G</div><div style="left:529px;top:306px;width:9px;height:13px;background:#f0c4cc"></div><div class="b" style="left:528.8px;top:308px;color:#202020">A</div><div class="b" style="left:538.8px;top:308px;color:#0000d0">C</div><div class="b" style="left:548.8px;top:308px;color:#0000d0">A</div><div class="b" style="left:558.8px;top:308px;color:#0000d0">A</div><div class="b" style="left:568.8px;top:308px;color:#0000d0">T</div><div class="b" style="left:578.8px;top:308px;color:#0000d0">A</div><div class="b" style="left:588.8px;top:308px;color:#0000d0">T</div><div class="b" style="left:598.8px;top:308px;color:#0000d0">C</div><div style="left:609px;top:306px;width:9px;height:13px;background:#f4eeb4"></div><div class="b" style="left:608.8px;top:308px;color:#202020">G</div><div class="b" style="left:618.8px;top:308px;color:#0000d0">C</div><div class="b" style="left:628.8px;top:308px;color:#0000d0">A</div><div style="left:639px;top:306px;width:9px;height:13px;background:#c4ecc4"></div><div class="b" style="left:638.8px;top:308px;color:#202020">T</div><div style="left:649px;top:306px;width:9px;height:13px;background:#f0c4cc"></div><div class="b" style="left:648.8px;top:308px;color:#202020">A</div><div class="b" style="left:658.8px;top:308px;color:#0000d0">C</div><div class="b" style="left:668.8px;top:308px;color:#0000d0">A</div><div class="b" style="left:678.8px;top:308px;color:#0000d0">A</div><div class="b" style="left:688.8px;top:308px;color:#0000d0">G</div><div class="b" style="left:698.8px;top:308px;color:#0000d0">C</div><div class="b" style="left:708.8px;top:308px;color:#0000d0">A</div><div class="b" style="left:718.8px;top:308px;color:#0000d0">G</div><div class="b" style="left:728.8px;top:308px;color:#0000d0">C</div><div class="b" style="left:738.8px;top:308px;color:#0000d0">A</div><div class="b" style="left:748.8px;top:308px;color:#0000d0">C</div><div class="b" style="left:758.8px;top:308px;color:#0000d0">A</div><div class="b" style="left:768.8px;top:308px;color:#0000d0">C</div><div class="b" style="left:778.8px;top:308px;color:#0000d0">G</div><div style="left:789px;top:306px;width:9px;height:13px;background:#c4ecc4"></div><div class="b" style="left:788.8px;top:308px;color:#202020">T</div><div style="left:799px;top:306px;width:9px;height:13px;background:#f4eeb4"></div><div class="b" style="left:798.8px;top:308px;color:#202020">G</div><div class="b" style="left:808.8px;top:308px;color:#0000d0">C</div><div class="b" style="left:818.8px;top:308px;color:#0000d0">A</div><div class="b" style="left:828.8px;top:308px;color:#0000d0">C</div><div class="b" style="left:838.8px;top:308px;color:#0000d0">C</div><div style="left:849px;top:306px;width:9px;height:13px;background:#c4c4f0"></div><div class="b" style="left:848.8px;top:308px;color:#202020">C</div><div class="b" style="left:858.8px;top:308px;color:#0000d0">C</div><div class="b" style="left:868.8px;top:308px;color:#0000d0">A</div><div style="left:879px;top:306px;width:9px;height:13px;background:#c4ecc4"></div><div class="b" style="left:878.8px;top:308px;color:#202020">T</div><div class="b" style="left:888.8px;top:308px;color:#0000d0">C</div><div class="b" style="left:898.8px;top:308px;color:#0000d0">C</div><div style="left:909px;top:306px;width:9px;height:13px;background:#c4c4f0"></div><div class="b" style="left:908.8px;top:308px;color:#202020">C</div><div class="b" style="left:918.8px;top:308px;color:#0000d0">C</div><div class="b" style="left:928.8px;top:308px;color:#0000d0">C</div><div class="b" style="left:938.8px;top:308px;color:#0000d0">A</div><div class="b" style="left:948.8px;top:308px;color:#0000d0">A</div><div class="b" style="left:958.8px;top:308px;color:#0000d0">G</div><div class="b" style="left:968.8px;top:308px;color:#0000d0">G</div><div class="b" style="left:978.8px;top:308px;color:#0000d0">G</div><div style="left:144px;top:319px;width:195px;height:24px;background:#5a5aff"></div><div style="left:339px;top:319px;width:179px;height:29px;background:#5a5aff"></div><div style="left:518px;top:319px;width:80px;height:24px;background:#5a5aff"></div><div style="left:598px;top:319px;width:20px;height:29px;background:#5a5aff"></div><div style="left:618px;top:319px;width:30px;height:20px;background:#5a5aff"></div><div style="left:648px;top:319px;width:20px;height:16px;background:#5a5aff"></div><div style="left:668px;top:319px;width:250px;height:12px;background:#5a5aff"></div><div style="left:918px;top:319px;width:60px;height:8px;background:#5a5aff"></div><div style="left:978px;top:319px;width:11px;height:12px;background:#5a5aff"></div><div style="left:368px;top:331px;width:11px;height:4px;background:#ffff00"></div><div style="left:388px;top:331px;width:11px;height:4px;background:#ffff00"></div><div style="left:468px;top:331px;width:11px;height:4px;background:#ffff00"></div></div>
<div class="t" style="right:871.12px;top:386.19px;font-size:11px;line-height:22px;font-weight:bold;color:#000;text-align:right;letter-spacing:0.38px;">tumor_01 (paired)</div>
<div class="t" style="right:872.58px;top:399.69px;font-size:11px;line-height:22px;font-weight:bold;color:#000;text-align:right;letter-spacing:0.42px;">Overview Variants</div>
<div class="t" style="right:868.00px;top:413.69px;font-size:11px;line-height:22px;font-weight:bold;color:#000;text-align:right;letter-spacing:0.5px;">Detected</div>
<div class="t" style="right:868.32px;top:426.69px;font-size:11px;line-height:22px;font-weight:normal;color:#000;text-align:right;letter-spacing:0.18px;">Variants (1,643)</div>
<div style="left:4px;top:449px;width:985px;height:1px;background:#6a6a6a"></div>
<div style="left:5px;top:450px;width:984px;height:64px;background:#f0f0ff"></div>
<div class="t" style="right:871.12px;top:451.19px;font-size:11px;line-height:22px;font-weight:bold;color:#000;text-align:right;letter-spacing:0.38px;">tumor_01 (paired)</div>
<div class="t" style="right:871.65px;top:464.69px;font-size:11px;line-height:22px;font-weight:bold;color:#000;text-align:right;letter-spacing:0.35px;">Variants Detected in</div>
<div class="t" style="right:868.10px;top:479.19px;font-size:11px;line-height:22px;font-weight:bold;color:#000;text-align:right;letter-spacing:0.4px;">Detail</div>
<div class="t" style="right:868.32px;top:491.19px;font-size:11px;line-height:22px;font-weight:normal;color:#000;text-align:right;letter-spacing:0.18px;">Variants (1,643)</div>
<div style="left:4px;top:514px;width:985px;height:1px;background:#6a6a6a"></div>
<div style="left:260px;top:420px;width:7px;height:12px;background:#d06060;border:1px solid #111"></div>
<div style="left:260px;top:436px;width:7px;height:12px;background:#ecc4c8;border:1px solid #b4b4b4"></div>
<div style="left:260px;top:485px;width:7px;height:12px;background:#d06060;border:1px solid #111"></div>
<div style="left:260px;top:501px;width:7px;height:12px;background:#ecc4c8;border:1px solid #b4b4b4"></div>
<div style="left:460px;top:420px;width:7px;height:12px;background:#d06060;border:1px solid #111"></div>
<div style="left:460px;top:436px;width:7px;height:12px;background:#ecc4c8;border:1px solid #b4b4b4"></div>
<div style="left:460px;top:485px;width:7px;height:12px;background:#d06060;border:1px solid #111"></div>
<div style="left:460px;top:501px;width:7px;height:12px;background:#ecc4c8;border:1px solid #b4b4b4"></div>
<div style="left:520px;top:420px;width:7px;height:12px;background:#d06060;border:1px solid #111"></div>
<div style="left:520px;top:436px;width:7px;height:12px;background:#ecc4c8;border:1px solid #b4b4b4"></div>
<div style="left:520px;top:485px;width:7px;height:12px;background:#d06060;border:1px solid #111"></div>
<div style="left:520px;top:501px;width:7px;height:12px;background:#ecc4c8;border:1px solid #b4b4b4"></div>
<div style="left:610px;top:420px;width:7px;height:12px;background:#d06060;border:1px solid #111"></div>
<div style="left:610px;top:436px;width:7px;height:12px;background:#ecc4c8;border:1px solid #b4b4b4"></div>
<div style="left:610px;top:485px;width:7px;height:12px;background:#d06060;border:1px solid #111"></div>
<div style="left:610px;top:501px;width:7px;height:12px;background:#ecc4c8;border:1px solid #b4b4b4"></div>
<div style="left:740px;top:420px;width:7px;height:12px;background:#d06060;border:1px solid #111"></div>
<div style="left:740px;top:436px;width:7px;height:12px;background:#ecc4c8;border:1px solid #b4b4b4"></div>
<div style="left:740px;top:485px;width:7px;height:12px;background:#d06060;border:1px solid #111"></div>
<div style="left:740px;top:501px;width:7px;height:12px;background:#ecc4c8;border:1px solid #b4b4b4"></div>
<div style="left:608px;top:47px;width:11px;height:10px;background:#c4c4c4;border:2px solid #6b6b6b"></div>
<div style="left:608px;top:56px;width:2px;height:471px;background:#6b6b6b"></div>
<div style="left:617px;top:56px;width:2px;height:471px;background:#6b6b6b"></div>
<svg style="left:600px;top:280px" width="50" height="40" viewBox="600 280 50 40"><path d="M639.2 286.3L641.6 289.2L630.5 300L627.8 297.2Z" fill="#c80000"/><path d="M623.7 292.9L634.2 303.2L618.6 307.9Z" fill="#c80000"/></svg>
<div style="left:990px;top:62px;width:16px;height:465px;background:#ececec"></div>
<svg style="left:993px;top:68px" width="10" height="6" viewBox="0 0 10 6"><path d="M1 5L5 1L9 5Z" fill="#333"/></svg>
<div style="left:990px;top:147px;width:15px;height:362px;background:linear-gradient(90deg,#f4f4f4,#e2e2e2 60%,#d0d0d0);border:1px solid #a0a0a0;border-radius:2px"></div>
<div style="left:994px;top:324px;width:7px;height:1px;background:#333"></div>
<div style="left:994px;top:325px;width:7px;height:1px;background:#a8a8a8"></div>
<div style="left:994px;top:327px;width:7px;height:1px;background:#333"></div>
<div style="left:994px;top:328px;width:7px;height:1px;background:#a8a8a8"></div>
<div style="left:994px;top:330px;width:7px;height:1px;background:#333"></div>
<div style="left:994px;top:331px;width:7px;height:1px;background:#a8a8a8"></div>
<svg style="left:993px;top:515px" width="10" height="6" viewBox="0 0 10 6"><path d="M1 1L5 5L9 1Z" fill="#333"/></svg>
<div style="left:144px;top:528px;width:845px;height:16px;background:#ececec"></div>
<div style="left:144px;top:528px;width:16px;height:16px;background:#f0f0f0"></div>
<svg style="left:149px;top:531px" width="6" height="10" viewBox="0 0 6 10"><path d="M5 1L1 5L5 9Z" fill="#222"/></svg>
<div style="left:221px;top:528px;width:7px;height:15px;background:linear-gradient(180deg,#f6f6f6 0%,#ececec 45%,#d6d6d6 55%,#cfcfcf 100%);border:1px solid #8c8c8c;border-radius:2px"></div>
<svg style="left:978px;top:531px" width="6" height="10" viewBox="0 0 6 10"><path d="M1 1L5 5L1 9Z" fill="#222"/></svg>
<div style="left:4px;top:544px;width:1003px;height:22px;background:#f0f0f0"></div>
<div style="left:3px;top:566px;width:1005px;height:2px;background:#fafafa"></div>
<div style="left:0px;top:568px;width:1009px;height:1px;background:#c8c8c8"></div>
<div style="left:6px;top:546px;width:18px;height:18px;background:#b8b4b0;border:1px solid #3399ff"></div><svg style="left:8px;top:549px" width="16" height="13" viewBox="0 0 16 13"><rect x="0" y="0" width="3" height="8" fill="#d86060"/><rect x="4" y="3" width="3" height="5" fill="#d86060"/><rect x="8" y="1" width="3" height="7" fill="#d86060"/><rect x="12" y="5" width="3" height="3" fill="#d86060"/><rect x="2" y="9" width="3" height="3" fill="#3a5ad8"/><rect x="6" y="6" width="3" height="6" fill="#3a5ad8"/><rect x="10" y="8" width="3" height="4" fill="#3a5ad8"/></svg><svg style="left:29px;top:548px" width="13" height="15" viewBox="0 0 13 15"><rect x="0.7" y="0.7" width="11" height="13" fill="#fff" stroke="#3d6fa6" stroke-width="1.4"/><circle cx="6.2" cy="5.9" r="3.5" fill="none" stroke="#3d6fa6" stroke-width="1.2"/><path d="M6.2 3.9V6.2H8.2" fill="none" stroke="#3d6fa6" stroke-width="1.1"/><rect x="2.5" y="10.6" width="7.5" height="1" fill="#3d6fa6"/></svg><svg style="left:49px;top:548px" width="15" height="15" viewBox="0 0 15 15"><path d="M0.75 0.75H7.5L11.25 4.5V14.25H0.75Z" fill="#eef2f8" stroke="#3d6fa6" stroke-width="1.5"/><path d="M7.5 0.75V4.5H11.25" fill="none" stroke="#3d6fa6" stroke-width="1.3"/><path d="M5 9.5L8 13L14 1" fill="none" stroke="#1e8a2e" stroke-width="1.8"/></svg><div style="left:806px;top:546px;width:16px;height:16px;background:#c2c2c2"></div><svg style="left:800px;top:540px" width="45" height="25" viewBox="800 540 45 25"><path d="M809.2 546.6L819.2 554.6L815.6 555.6L817.6 559.6L814.6 561.2L812.6 557.2L809.2 560Z" fill="#cfcfcf" stroke="#262626" stroke-width="1.1" stroke-linejoin="miter"/><circle cx="830" cy="552.9" r="4.4" fill="#fff" stroke="#222" stroke-width="1.2"/><path d="M827 552.9H833M830 549.9V555.9" stroke="#222" stroke-width="1.8"/><path d="M833.6 556.5L838.5 561.4" stroke="#222" stroke-width="2.4"/><path d="M836.4 546.2L838.8 546.2L838.8 548.6Z" fill="#333"/></svg><div style="left:843px;top:553px;width:10px;height:2px;background:#2a2a2a"></div><div style="left:860px;top:552px;width:74px;height:4px;background:#fff;border:1px solid #333"></div><svg style="left:920px;top:540px" width="20" height="25" viewBox="920 540 20 25"><path d="M930.8 549.8H936.6L935.1 558.3H932.6Z" fill="#d4d4d4" stroke="#333" stroke-width="1.1" stroke-linejoin="round"/><rect x="930.3" y="549.2" width="6.8" height="1.3" fill="#333"/></svg><div style="left:941px;top:553px;width:10px;height:2px;background:#b0b0b0"></div><div style="left:945px;top:549px;width:2px;height:10px;background:#b0b0b0"></div><div style="left:956px;top:548px;width:15px;height:13px;background:#fcfcfc;border:1px solid #5e5e5e"></div><div style="left:957px;top:549px;width:13px;height:2px;background:#9c9cc4"></div><div style="left:957px;top:551px;width:13px;height:1px;background:#e8e8f0"></div><div style="left:973px;top:548px;width:15px;height:13px;background:#fcfcfc;border:1px solid #5e5e5e"></div><div style="left:974px;top:549px;width:13px;height:2px;background:#9c9cc4"></div><div style="left:974px;top:551px;width:13px;height:1px;background:#e8e8f0"></div><div style="left:990px;top:548px;width:15px;height:13px;background:#fcfcfc;border:1px solid #5e5e5e"></div><div style="left:991px;top:549px;width:13px;height:2px;background:#9c9cc4"></div><div style="left:991px;top:551px;width:13px;height:1px;background:#e8e8f0"></div><svg style="left:950px;top:545px" width="59" height="20" viewBox="950 545 59 20"><path d="M957 555L960 552.2V557.8Z" fill="#1a1a1a"/><path d="M970 555L967 552.2V557.8Z" fill="#1a1a1a"/><path d="M962 552.5H965M962 558.5H965M961.5 553V554.5M961.5 556V557.8M965.5 553V554.5M965.5 556V557.8" stroke="#e01010" stroke-width="1"/><path d="M974 555L977 552.2V557.8Z" fill="#1a1a1a"/><path d="M987 555L984 552.2V557.8Z" fill="#1a1a1a"/><path d="M978.5 555H980M981.5 555H983" stroke="#1a1a1a" stroke-width="1.2"/><path d="M993.6 552H995.3V558.6H993.6V554L992.6 554.6V553.2Z" fill="#1a1a1a"/><path d="M1000.6 552H1002.3V558.6H1000.6V554L999.6 554.6V553.2Z" fill="#1a1a1a"/><rect x="997" y="554" width="1.2" height="1.2" fill="#888"/><rect x="997" y="557" width="1.2" height="1.2" fill="#888"/></svg>
<div style="left:0px;top:574px;width:1009px;height:1px;background:#6a6a6a"></div>
<div style="left:0px;top:575px;width:130px;height:22px;background:#f0f0f0"></div><div style="left:1px;top:575px;width:129px;height:1px;background:#fafafa"></div><div style="left:129px;top:575px;width:1px;height:21px;background:#a8a8a8"></div><div style="left:130px;top:575px;width:879px;height:1px;background:#fafafa"></div><div style="left:130px;top:575px;width:1px;height:21px;background:#fafafa"></div><div style="left:130px;top:595px;width:879px;height:1px;background:#a8a8a8"></div><div style="left:130px;top:596px;width:879px;height:1px;background:#fafafa"></div><svg style="left:7px;top:578px" width="16" height="13" viewBox="0 0 16 13"><rect x="0" y="0" width="16" height="13" fill="#5c5c7c"/><rect x="1" y="1" width="2" height="2" fill="#8fd870"/><rect x="4" y="1" width="5" height="2" fill="#8fd870"/><rect x="10" y="1" width="5" height="2" fill="#8fd870"/><rect x="1" y="4" width="2" height="2" fill="#8fd870"/><rect x="4" y="4" width="5" height="2" fill="#f4f8ff"/><rect x="10" y="4" width="5" height="2" fill="#f4f8ff"/><rect x="1" y="7" width="2" height="2" fill="#8fd870"/><rect x="4" y="7" width="5" height="2" fill="#f4f8ff"/><rect x="10" y="7" width="5" height="2" fill="#f4f8ff"/><rect x="1" y="10" width="2" height="2" fill="#8fd870"/><rect x="4" y="10" width="5" height="2" fill="#f4f8ff"/><rect x="10" y="10" width="5" height="2" fill="#f4f8ff"/></svg><div class="t" style="left:26.5px;top:574.19px;font-size:11px;line-height:22px;font-weight:normal;color:#000;letter-spacing:0.17px;">tumor_01 (pai...</div><svg style="left:112px;top:581px" width="9" height="9" viewBox="0 0 9 9"><path d="M0.8 0.8L8.2 8.2M8.2 0.8L0.8 8.2" stroke="#707070" stroke-width="1.6"/></svg>
<div style="left:3px;top:597px;width:1003px;height:1px;background:#707070"></div><div style="left:3px;top:597px;width:2px;height:264px;background:#6a6a6a"></div><div style="left:5px;top:597px;width:1px;height:264px;background:#8a8a8a"></div><div style="left:4px;top:598px;width:1001px;height:3px;background:#3399ff"></div><div style="left:4px;top:601px;width:1001px;height:2px;background:#6e6e6e"></div><div style="left:1005px;top:597px;width:1px;height:264px;background:#d0d0d0"></div><div style="left:6px;top:603px;width:998px;height:30px;background:#f0f0f0"></div><div style="left:1004px;top:601px;width:1px;height:33px;background:#8a8a8a"></div><div style="left:5px;top:633px;width:1000px;height:1px;background:#7a7a7a"></div><div style="left:5px;top:634px;width:1000px;height:4px;background:#f6f6f6"></div><div style="left:5px;top:638px;width:1000px;height:1px;background:#6a6a6a"></div><div style="left:5px;top:639px;width:1000px;height:1px;background:#9a9a9a"></div><div class="t" style="left:24.5px;top:610.19px;font-size:11px;line-height:22px;font-weight:normal;color:#000;letter-spacing:0.1px;">Rows: 91,229</div><div class="t" style="left:133px;top:610.19px;font-size:11px;line-height:22px;font-weight:normal;color:#000;letter-spacing:-0.13px;">Table view: Homo sapiens</div><div style="left:755px;top:608px;width:166px;height:20px;background:#fff;border:1px solid #acacac"></div><div style="left:925px;top:608px;width:55px;height:21px;background:linear-gradient(180deg,#f6f6f6 0%,#ebebeb 50%,#dcdcdc 51%,#d0d0d0 100%);border:1px solid #707070;border-radius:3px"></div><div class="t" style="left:751.20px;width:400px;text-align:center;top:607.19px;font-size:11px;line-height:22px;font-weight:normal;color:#000;letter-spacing:0.4px;">Filter</div><svg style="left:980px;top:605px" width="24" height="24" viewBox="980 605 24 24"><rect x="986.3" y="611.9" width="11.7" height="1.2" fill="#3c3c3c"/><rect x="986.3" y="615" width="11.7" height="1.2" fill="#3c3c3c"/><path d="M988.2 618.1H996.2L992.2 622.2Z" fill="#3c3c3c"/></svg><div style="left:6px;top:640px;width:981px;height:203px;background:#fff"></div><div style="left:6px;top:649px;width:981px;height:13px;background:#f5f5f5"></div><div style="left:6px;top:662px;width:981px;height:1px;background:#e2e2e2"></div><div style="left:84px;top:640px;width:1px;height:22px;background:#fbfbfb"></div><div style="left:85px;top:640px;width:1px;height:22px;background:#e2e2e2"></div><div style="left:164px;top:640px;width:1px;height:22px;background:#fbfbfb"></div><div style="left:165px;top:640px;width:1px;height:22px;background:#e2e2e2"></div><div style="left:244px;top:640px;width:1px;height:22px;background:#fbfbfb"></div><div style="left:245px;top:640px;width:1px;height:22px;background:#e2e2e2"></div><div style="left:324px;top:640px;width:1px;height:22px;background:#fbfbfb"></div><div style="left:325px;top:640px;width:1px;height:22px;background:#e2e2e2"></div><div style="left:404px;top:640px;width:1px;height:22px;background:#fbfbfb"></div><div style="left:405px;top:640px;width:1px;height:22px;background:#e2e2e2"></div><div style="left:484px;top:640px;width:1px;height:22px;background:#fbfbfb"></div><div style="left:485px;top:640px;width:1px;height:22px;background:#e2e2e2"></div><div style="left:564px;top:640px;width:1px;height:22px;background:#fbfbfb"></div><div style="left:565px;top:640px;width:1px;height:22px;background:#e2e2e2"></div><div style="left:644px;top:640px;width:1px;height:22px;background:#fbfbfb"></div><div style="left:645px;top:640px;width:1px;height:22px;background:#e2e2e2"></div><div style="left:724px;top:640px;width:1px;height:22px;background:#fbfbfb"></div><div style="left:725px;top:640px;width:1px;height:22px;background:#e2e2e2"></div><div style="left:804px;top:640px;width:1px;height:22px;background:#fbfbfb"></div><div style="left:805px;top:640px;width:1px;height:22px;background:#e2e2e2"></div><div style="left:885px;top:640px;width:1px;height:22px;background:#fbfbfb"></div><div style="left:886px;top:640px;width:1px;height:22px;background:#e2e2e2"></div><div style="left:965px;top:640px;width:1px;height:22px;background:#fbfbfb"></div><div style="left:966px;top:640px;width:1px;height:22px;background:#e2e2e2"></div><div class="t" style="left:10px;top:642.19px;font-size:11px;line-height:22px;font-weight:normal;color:#000;letter-spacing:-0.25px;">Chromosome</div><div class="t" style="left:90px;top:642.19px;font-size:11px;line-height:22px;font-weight:normal;color:#000;">Region</div><div class="t" style="left:170px;top:642.19px;font-size:11px;line-height:22px;font-weight:normal;color:#000;letter-spacing:0.3px;">Type</div><div class="t" style="left:250px;top:642.19px;font-size:11px;line-height:22px;font-weight:normal;color:#000;letter-spacing:-0.1px;">Reference</div><div class="t" style="left:330px;top:642.19px;font-size:11px;line-height:22px;font-weight:normal;color:#000;letter-spacing:-0.3px;">Allele</div><div class="t" style="left:410px;top:642.19px;font-size:11px;line-height:22px;font-weight:normal;color:#000;letter-spacing:-0.1px;">Reference ...</div><div class="t" style="left:490px;top:642.19px;font-size:11px;line-height:22px;font-weight:normal;color:#000;letter-spacing:-0.1px;">Length</div><div class="t" style="left:570px;top:642.19px;font-size:11px;line-height:22px;font-weight:normal;color:#000;letter-spacing:-0.2px;">Zygosity</div><div class="t" style="left:650px;top:642.19px;font-size:11px;line-height:22px;font-weight:normal;color:#000;letter-spacing:-0.1px;">Count</div><div class="t" style="left:730px;top:642.19px;font-size:11px;line-height:22px;font-weight:normal;color:#000;letter-spacing:-0.2px;">Coverage</div><div class="t" style="left:810px;top:642.19px;font-size:11px;line-height:22px;font-weight:normal;color:#000;letter-spacing:-0.2px;">Frequency</div><div class="t" style="left:891px;top:642.19px;font-size:11px;line-height:22px;font-weight:normal;color:#000;letter-spacing:-0.1px;">Forward re...</div><div class="t" style="left:971px;top:642.19px;font-size:11px;line-height:22px;font-weight:normal;color:#000;letter-spacing:-0.1px;">Rev</div><svg style="left:684px;top:653px" width="6" height="5" viewBox="0 0 6 5"><path d="M0.5 4.5L4.5 0.5" stroke="#808080" stroke-width="1.1"/><path d="M2.5 4.5H4.8V2.2" stroke="#b8b8b8" stroke-width="0.8" fill="none"/></svg><div style="left:6px;top:663px;width:981px;height:1px;background:#fafafa"></div><div style="left:6px;top:664px;width:981px;height:15px;background:#f0f0f0"></div><div class="t" style="left:7.5px;top:660.19px;font-size:11px;line-height:22px;font-weight:normal;color:#000;letter-spacing:0.05px;">20</div><div class="t" style="left:87px;top:660.19px;font-size:11px;line-height:22px;font-weight:normal;color:#000;letter-spacing:0.05px;">56137167</div><div class="t" style="left:167px;top:660.19px;font-size:11px;line-height:22px;font-weight:normal;color:#000;letter-spacing:-1.2px;">SNV</div><div class="t" style="left:247px;top:660.19px;font-size:11px;line-height:22px;font-weight:normal;color:#000;letter-spacing:0.05px;">G</div><div class="t" style="left:327px;top:660.19px;font-size:11px;line-height:22px;font-weight:normal;color:#000;letter-spacing:0.05px;">G</div><div class="t" style="left:407px;top:660.19px;font-size:11px;line-height:22px;font-weight:normal;color:#000;letter-spacing:0.05px;">Yes</div><div class="t" style="right:445.60px;top:660.19px;font-size:11px;line-height:22px;font-weight:normal;color:#000;text-align:right;letter-spacing:-0.1px;">1</div><div class="t" style="left:567px;top:660.19px;font-size:11px;line-height:22px;font-weight:normal;color:#000;letter-spacing:-0.2px;">Homozygous</div><div class="t" style="right:285.60px;top:660.19px;font-size:11px;line-height:22px;font-weight:normal;color:#000;text-align:right;letter-spacing:-0.1px;">12</div><div class="t" style="right:205.60px;top:660.19px;font-size:11px;line-height:22px;font-weight:normal;color:#000;text-align:right;letter-spacing:-0.1px;">12</div><div class="t" style="right:124.60px;top:660.19px;font-size:11px;line-height:22px;font-weight:normal;color:#000;text-align:right;letter-spacing:-0.1px;">100.00</div><div class="t" style="right:44.60px;top:660.19px;font-size:11px;line-height:22px;font-weight:normal;color:#000;text-align:right;letter-spacing:-0.1px;">7</div><div style="left:6px;top:679px;width:981px;height:16px;background:#ffffff"></div><div class="t" style="left:7.5px;top:676.19px;font-size:11px;line-height:22px;font-weight:normal;color:#000;letter-spacing:0.05px;">20</div><div class="t" style="left:87px;top:676.19px;font-size:11px;line-height:22px;font-weight:normal;color:#000;letter-spacing:0.05px;">57484770</div><div class="t" style="left:167px;top:676.19px;font-size:11px;line-height:22px;font-weight:normal;color:#000;letter-spacing:-1.2px;">SNV</div><div class="t" style="left:247px;top:676.19px;font-size:11px;line-height:22px;font-weight:normal;color:#000;letter-spacing:0.05px;">C</div><div class="t" style="left:327px;top:676.19px;font-size:11px;line-height:22px;font-weight:normal;color:#000;letter-spacing:0.05px;">C</div><div class="t" style="left:407px;top:676.19px;font-size:11px;line-height:22px;font-weight:normal;color:#000;letter-spacing:0.05px;">Yes</div><div class="t" style="right:445.60px;top:676.19px;font-size:11px;line-height:22px;font-weight:normal;color:#000;text-align:right;letter-spacing:-0.1px;">1</div><div class="t" style="left:567px;top:676.19px;font-size:11px;line-height:22px;font-weight:normal;color:#000;letter-spacing:-0.2px;">Homozygous</div><div class="t" style="right:285.60px;top:676.19px;font-size:11px;line-height:22px;font-weight:normal;color:#000;text-align:right;letter-spacing:-0.1px;">12</div><div class="t" style="right:205.60px;top:676.19px;font-size:11px;line-height:22px;font-weight:normal;color:#000;text-align:right;letter-spacing:-0.1px;">12</div><div class="t" style="right:124.60px;top:676.19px;font-size:11px;line-height:22px;font-weight:normal;color:#000;text-align:right;letter-spacing:-0.1px;">100.00</div><div class="t" style="right:44.60px;top:676.19px;font-size:11px;line-height:22px;font-weight:normal;color:#000;text-align:right;letter-spacing:-0.1px;">8</div><div style="left:6px;top:695px;width:981px;height:16px;background:#f0f0f0"></div><div class="t" style="left:7.5px;top:692.19px;font-size:11px;line-height:22px;font-weight:normal;color:#000;letter-spacing:0.05px;">20</div><div class="t" style="left:87px;top:692.19px;font-size:11px;line-height:22px;font-weight:normal;color:#000;letter-spacing:0.05px;">57485862</div><div class="t" style="left:167px;top:692.19px;font-size:11px;line-height:22px;font-weight:normal;color:#000;letter-spacing:-1.2px;">SNV</div><div class="t" style="left:247px;top:692.19px;font-size:11px;line-height:22px;font-weight:normal;color:#000;letter-spacing:0.05px;">T</div><div class="t" style="left:327px;top:692.19px;font-size:11px;line-height:22px;font-weight:normal;color:#000;letter-spacing:0.05px;">T</div><div class="t" style="left:407px;top:692.19px;font-size:11px;line-height:22px;font-weight:normal;color:#000;letter-spacing:0.05px;">Yes</div><div class="t" style="right:445.60px;top:692.19px;font-size:11px;line-height:22px;font-weight:normal;color:#000;text-align:right;letter-spacing:-0.1px;">1</div><div class="t" style="left:567px;top:692.19px;font-size:11px;line-height:22px;font-weight:normal;color:#000;letter-spacing:-0.2px;">Homozygous</div><div class="t" style="right:285.60px;top:692.19px;font-size:11px;line-height:22px;font-weight:normal;color:#000;text-align:right;letter-spacing:-0.1px;">12</div><div class="t" style="right:205.60px;top:692.19px;font-size:11px;line-height:22px;font-weight:normal;color:#000;text-align:right;letter-spacing:-0.1px;">12</div><div class="t" style="right:124.60px;top:692.19px;font-size:11px;line-height:22px;font-weight:normal;color:#000;text-align:right;letter-spacing:-0.1px;">100.00</div><div class="t" style="right:44.60px;top:692.19px;font-size:11px;line-height:22px;font-weight:normal;color:#000;text-align:right;letter-spacing:-0.1px;">7</div><div style="left:6px;top:711px;width:981px;height:16px;background:#ffffff"></div><div class="t" style="left:7.5px;top:708.19px;font-size:11px;line-height:22px;font-weight:normal;color:#000;letter-spacing:0.05px;">20</div><div class="t" style="left:87px;top:708.19px;font-size:11px;line-height:22px;font-weight:normal;color:#000;letter-spacing:0.05px;">57605482</div><div class="t" style="left:167px;top:708.19px;font-size:11px;line-height:22px;font-weight:normal;color:#000;letter-spacing:-1.2px;">SNV</div><div class="t" style="left:247px;top:708.19px;font-size:11px;line-height:22px;font-weight:normal;color:#000;letter-spacing:0.05px;">T</div><div class="t" style="left:327px;top:708.19px;font-size:11px;line-height:22px;font-weight:normal;color:#000;letter-spacing:0.05px;">T</div><div class="t" style="left:407px;top:708.19px;font-size:11px;line-height:22px;font-weight:normal;color:#000;letter-spacing:0.05px;">Yes</div><div class="t" style="right:445.60px;top:708.19px;font-size:11px;line-height:22px;font-weight:normal;color:#000;text-align:right;letter-spacing:-0.1px;">1</div><div class="t" style="left:567px;top:708.19px;font-size:11px;line-height:22px;font-weight:normal;color:#000;letter-spacing:-0.2px;">Homozygous</div><div class="t" style="right:285.60px;top:708.19px;font-size:11px;line-height:22px;font-weight:normal;color:#000;text-align:right;letter-spacing:-0.1px;">12</div><div class="t" style="right:205.60px;top:708.19px;font-size:11px;line-height:22px;font-weight:normal;color:#000;text-align:right;letter-spacing:-0.1px;">12</div><div class="t" style="right:124.60px;top:708.19px;font-size:11px;line-height:22px;font-weight:normal;color:#000;text-align:right;letter-spacing:-0.1px;">100.00</div><div class="t" style="right:44.60px;top:708.19px;font-size:11px;line-height:22px;font-weight:normal;color:#000;text-align:right;letter-spacing:-0.1px;">7</div><div style="left:6px;top:727px;width:981px;height:16px;background:#f0f0f0"></div><div class="t" style="left:7.5px;top:724.19px;font-size:11px;line-height:22px;font-weight:normal;color:#000;letter-spacing:0.05px;">20</div><div class="t" style="left:87px;top:724.19px;font-size:11px;line-height:22px;font-weight:normal;color:#000;letter-spacing:0.05px;">4680398</div><div class="t" style="left:167px;top:724.19px;font-size:11px;line-height:22px;font-weight:normal;color:#000;letter-spacing:-1.2px;">SNV</div><div class="t" style="left:247px;top:724.19px;font-size:11px;line-height:22px;font-weight:normal;color:#000;letter-spacing:0.05px;">G</div><div class="t" style="left:327px;top:724.19px;font-size:11px;line-height:22px;font-weight:normal;color:#000;letter-spacing:0.05px;">G</div><div class="t" style="left:407px;top:724.19px;font-size:11px;line-height:22px;font-weight:normal;color:#000;letter-spacing:0.05px;">Yes</div><div class="t" style="right:445.60px;top:724.19px;font-size:11px;line-height:22px;font-weight:normal;color:#000;text-align:right;letter-spacing:-0.1px;">1</div><div class="t" style="left:567px;top:724.19px;font-size:11px;line-height:22px;font-weight:normal;color:#000;letter-spacing:-0.2px;">Homozygous</div><div class="t" style="right:285.60px;top:724.19px;font-size:11px;line-height:22px;font-weight:normal;color:#000;text-align:right;letter-spacing:-0.1px;">13</div><div class="t" style="right:205.60px;top:724.19px;font-size:11px;line-height:22px;font-weight:normal;color:#000;text-align:right;letter-spacing:-0.1px;">13</div><div class="t" style="right:124.60px;top:724.19px;font-size:11px;line-height:22px;font-weight:normal;color:#000;text-align:right;letter-spacing:-0.1px;">100.00</div><div class="t" style="right:44.60px;top:724.19px;font-size:11px;line-height:22px;font-weight:normal;color:#000;text-align:right;letter-spacing:-0.1px;">3</div><div style="left:6px;top:743px;width:981px;height:16px;background:#ffffff"></div><div class="t" style="left:7.5px;top:740.19px;font-size:11px;line-height:22px;font-weight:normal;color:#000;letter-spacing:0.05px;">20</div><div class="t" style="left:87px;top:740.19px;font-size:11px;line-height:22px;font-weight:normal;color:#000;letter-spacing:0.05px;">25004239</div><div class="t" style="left:167px;top:740.19px;font-size:11px;line-height:22px;font-weight:normal;color:#000;letter-spacing:-1.2px;">SNV</div><div class="t" style="left:247px;top:740.19px;font-size:11px;line-height:22px;font-weight:normal;color:#000;letter-spacing:0.05px;">G</div><div class="t" style="left:327px;top:740.19px;font-size:11px;line-height:22px;font-weight:normal;color:#000;letter-spacing:0.05px;">G</div><div class="t" style="left:407px;top:740.19px;font-size:11px;line-height:22px;font-weight:normal;color:#000;letter-spacing:0.05px;">Yes</div><div class="t" style="right:445.60px;top:740.19px;font-size:11px;line-height:22px;font-weight:normal;color:#000;text-align:right;letter-spacing:-0.1px;">1</div><div class="t" style="left:567px;top:740.19px;font-size:11px;line-height:22px;font-weight:normal;color:#000;letter-spacing:-0.2px;">Homozygous</div><div class="t" style="right:285.60px;top:740.19px;font-size:11px;line-height:22px;font-weight:normal;color:#000;text-align:right;letter-spacing:-0.1px;">13</div><div class="t" style="right:205.60px;top:740.19px;font-size:11px;line-height:22px;font-weight:normal;color:#000;text-align:right;letter-spacing:-0.1px;">13</div><div class="t" style="right:124.60px;top:740.19px;font-size:11px;line-height:22px;font-weight:normal;color:#000;text-align:right;letter-spacing:-0.1px;">100.00</div><div class="t" style="right:44.60px;top:740.19px;font-size:11px;line-height:22px;font-weight:normal;color:#000;text-align:right;letter-spacing:-0.1px;">9</div><div style="left:6px;top:759px;width:981px;height:16px;background:#f0f0f0"></div><div class="t" style="left:7.5px;top:756.19px;font-size:11px;line-height:22px;font-weight:normal;color:#000;letter-spacing:0.05px;">20</div><div class="t" style="left:87px;top:756.19px;font-size:11px;line-height:22px;font-weight:normal;color:#000;letter-spacing:0.05px;">31024380</div><div class="t" style="left:167px;top:756.19px;font-size:11px;line-height:22px;font-weight:normal;color:#000;letter-spacing:-1.2px;">SNV</div><div class="t" style="left:247px;top:756.19px;font-size:11px;line-height:22px;font-weight:normal;color:#000;letter-spacing:0.05px;">C</div><div class="t" style="left:327px;top:756.19px;font-size:11px;line-height:22px;font-weight:normal;color:#000;letter-spacing:0.05px;">C</div><div class="t" style="left:407px;top:756.19px;font-size:11px;line-height:22px;font-weight:normal;color:#000;letter-spacing:0.05px;">Yes</div><div class="t" style="right:445.60px;top:756.19px;font-size:11px;line-height:22px;font-weight:normal;color:#000;text-align:right;letter-spacing:-0.1px;">1</div><div class="t" style="left:567px;top:756.19px;font-size:11px;line-height:22px;font-weight:normal;color:#000;letter-spacing:-0.2px;">Homozygous</div><div class="t" style="right:285.60px;top:756.19px;font-size:11px;line-height:22px;font-weight:normal;color:#000;text-align:right;letter-spacing:-0.1px;">13</div><div class="t" style="right:205.60px;top:756.19px;font-size:11px;line-height:22px;font-weight:normal;color:#000;text-align:right;letter-spacing:-0.1px;">13</div><div class="t" style="right:124.60px;top:756.19px;font-size:11px;line-height:22px;font-weight:normal;color:#000;text-align:right;letter-spacing:-0.1px;">100.00</div><div class="t" style="right:44.60px;top:756.19px;font-size:11px;line-height:22px;font-weight:normal;color:#000;text-align:right;letter-spacing:-0.1px;">8</div><div style="left:6px;top:775px;width:981px;height:16px;background:#ffffff"></div><div class="t" style="left:7.5px;top:772.19px;font-size:11px;line-height:22px;font-weight:normal;color:#000;letter-spacing:0.05px;">20</div><div class="t" style="left:87px;top:772.19px;font-size:11px;line-height:22px;font-weight:normal;color:#000;letter-spacing:0.05px;">39793971</div><div class="t" style="left:167px;top:772.19px;font-size:11px;line-height:22px;font-weight:normal;color:#000;letter-spacing:-1.2px;">SNV</div><div class="t" style="left:247px;top:772.19px;font-size:11px;line-height:22px;font-weight:normal;color:#000;letter-spacing:0.05px;">G</div><div class="t" style="left:327px;top:772.19px;font-size:11px;line-height:22px;font-weight:normal;color:#000;letter-spacing:0.05px;">G</div><div class="t" style="left:407px;top:772.19px;font-size:11px;line-height:22px;font-weight:normal;color:#000;letter-spacing:0.05px;">Yes</div><div class="t" style="right:445.60px;top:772.19px;font-size:11px;line-height:22px;font-weight:normal;color:#000;text-align:right;letter-spacing:-0.1px;">1</div><div class="t" style="left:567px;top:772.19px;font-size:11px;line-height:22px;font-weight:normal;color:#000;letter-spacing:-0.2px;">Homozygous</div><div class="t" style="right:285.60px;top:772.19px;font-size:11px;line-height:22px;font-weight:normal;color:#000;text-align:right;letter-spacing:-0.1px;">13</div><div class="t" style="right:205.60px;top:772.19px;font-size:11px;line-height:22px;font-weight:normal;color:#000;text-align:right;letter-spacing:-0.1px;">13</div><div class="t" style="right:124.60px;top:772.19px;font-size:11px;line-height:22px;font-weight:normal;color:#000;text-align:right;letter-spacing:-0.1px;">100.00</div><div class="t" style="right:44.60px;top:772.19px;font-size:11px;line-height:22px;font-weight:normal;color:#000;text-align:right;letter-spacing:-0.1px;">10</div><div style="left:6px;top:791px;width:981px;height:16px;background:#f0f0f0"></div><div class="t" style="left:7.5px;top:788.19px;font-size:11px;line-height:22px;font-weight:normal;color:#000;letter-spacing:0.05px;">20</div><div class="t" style="left:87px;top:788.19px;font-size:11px;line-height:22px;font-weight:normal;color:#000;letter-spacing:0.05px;">42159010</div><div class="t" style="left:167px;top:788.19px;font-size:11px;line-height:22px;font-weight:normal;color:#000;letter-spacing:-1.2px;">SNV</div><div class="t" style="left:247px;top:788.19px;font-size:11px;line-height:22px;font-weight:normal;color:#000;letter-spacing:0.05px;">C</div><div class="t" style="left:327px;top:788.19px;font-size:11px;line-height:22px;font-weight:normal;color:#000;letter-spacing:0.05px;">C</div><div class="t" style="left:407px;top:788.19px;font-size:11px;line-height:22px;font-weight:normal;color:#000;letter-spacing:0.05px;">Yes</div><div class="t" style="right:445.60px;top:788.19px;font-size:11px;line-height:22px;font-weight:normal;color:#000;text-align:right;letter-spacing:-0.1px;">1</div><div class="t" style="left:567px;top:788.19px;font-size:11px;line-height:22px;font-weight:normal;color:#000;letter-spacing:-0.2px;">Homozygous</div><div class="t" style="right:285.60px;top:788.19px;font-size:11px;line-height:22px;font-weight:normal;color:#000;text-align:right;letter-spacing:-0.1px;">13</div><div class="t" style="right:205.60px;top:788.19px;font-size:11px;line-height:22px;font-weight:normal;color:#000;text-align:right;letter-spacing:-0.1px;">13</div><div class="t" style="right:124.60px;top:788.19px;font-size:11px;line-height:22px;font-weight:normal;color:#000;text-align:right;letter-spacing:-0.1px;">100.00</div><div class="t" style="right:44.60px;top:788.19px;font-size:11px;line-height:22px;font-weight:normal;color:#000;text-align:right;letter-spacing:-0.1px;">9</div><div style="left:6px;top:807px;width:981px;height:16px;background:#3399ff"></div><div class="t" style="left:7.5px;top:804.19px;font-size:11px;line-height:22px;font-weight:normal;color:#fff;letter-spacing:0.05px;">20</div><div class="t" style="left:87px;top:804.19px;font-size:11px;line-height:22px;font-weight:normal;color:#fff;letter-spacing:0.05px;">4680413</div><div class="t" style="left:167px;top:804.19px;font-size:11px;line-height:22px;font-weight:normal;color:#fff;letter-spacing:-1.2px;">SNV</div><div class="t" style="left:247px;top:804.19px;font-size:11px;line-height:22px;font-weight:normal;color:#fff;letter-spacing:0.05px;">A</div><div class="t" style="left:327px;top:804.19px;font-size:11px;line-height:22px;font-weight:normal;color:#fff;letter-spacing:0.05px;">A</div><div class="t" style="left:407px;top:804.19px;font-size:11px;line-height:22px;font-weight:normal;color:#fff;letter-spacing:0.05px;">Yes</div><div class="t" style="right:445.60px;top:804.19px;font-size:11px;line-height:22px;font-weight:normal;color:#fff;text-align:right;letter-spacing:-0.1px;">1</div><div class="t" style="left:567px;top:804.19px;font-size:11px;line-height:22px;font-weight:normal;color:#fff;letter-spacing:-0.2px;">Homozygous</div><div class="t" style="right:285.60px;top:804.19px;font-size:11px;line-height:22px;font-weight:normal;color:#fff;text-align:right;letter-spacing:-0.1px;">14</div><div class="t" style="right:205.60px;top:804.19px;font-size:11px;line-height:22px;font-weight:normal;color:#fff;text-align:right;letter-spacing:-0.1px;">15</div><div class="t" style="right:124.60px;top:804.19px;font-size:11px;line-height:22px;font-weight:normal;color:#fff;text-align:right;letter-spacing:-0.1px;">93.33</div><div class="t" style="right:44.60px;top:804.19px;font-size:11px;line-height:22px;font-weight:normal;color:#fff;text-align:right;letter-spacing:-0.1px;">5</div><div style="left:6px;top:823px;width:981px;height:16px;background:#f0f0f0"></div><div class="t" style="left:7.5px;top:820.19px;font-size:11px;line-height:22px;font-weight:normal;color:#000;letter-spacing:0.05px;">20</div><div class="t" style="left:87px;top:820.19px;font-size:11px;line-height:22px;font-weight:normal;color:#000;letter-spacing:0.05px;">30411309</div><div class="t" style="left:167px;top:820.19px;font-size:11px;line-height:22px;font-weight:normal;color:#000;letter-spacing:-1.2px;">SNV</div><div class="t" style="left:247px;top:820.19px;font-size:11px;line-height:22px;font-weight:normal;color:#000;letter-spacing:0.05px;">C</div><div class="t" style="left:327px;top:820.19px;font-size:11px;line-height:22px;font-weight:normal;color:#000;letter-spacing:0.05px;">C</div><div class="t" style="left:407px;top:820.19px;font-size:11px;line-height:22px;font-weight:normal;color:#000;letter-spacing:0.05px;">Yes</div><div class="t" style="right:445.60px;top:820.19px;font-size:11px;line-height:22px;font-weight:normal;color:#000;text-align:right;letter-spacing:-0.1px;">1</div><div class="t" style="left:567px;top:820.19px;font-size:11px;line-height:22px;font-weight:normal;color:#000;letter-spacing:-0.2px;">Homozygous</div><div class="t" style="right:285.60px;top:820.19px;font-size:11px;line-height:22px;font-weight:normal;color:#000;text-align:right;letter-spacing:-0.1px;">14</div><div class="t" style="right:205.60px;top:820.19px;font-size:11px;line-height:22px;font-weight:normal;color:#000;text-align:right;letter-spacing:-0.1px;">14</div><div class="t" style="right:124.60px;top:820.19px;font-size:11px;line-height:22px;font-weight:normal;color:#000;text-align:right;letter-spacing:-0.1px;">100.00</div><div class="t" style="right:44.60px;top:820.19px;font-size:11px;line-height:22px;font-weight:normal;color:#000;text-align:right;letter-spacing:-0.1px;">9</div><div style="left:85px;top:664px;width:1px;height:175px;background:#d8d8d8"></div><div style="left:165px;top:664px;width:1px;height:175px;background:#d8d8d8"></div><div style="left:245px;top:664px;width:1px;height:175px;background:#d8d8d8"></div><div style="left:325px;top:664px;width:1px;height:175px;background:#d8d8d8"></div><div style="left:405px;top:664px;width:1px;height:175px;background:#d8d8d8"></div><div style="left:485px;top:664px;width:1px;height:175px;background:#d8d8d8"></div><div style="left:565px;top:664px;width:1px;height:175px;background:#d8d8d8"></div><div style="left:645px;top:664px;width:1px;height:175px;background:#d8d8d8"></div><div style="left:725px;top:664px;width:1px;height:175px;background:#d8d8d8"></div><div style="left:805px;top:664px;width:1px;height:175px;background:#d8d8d8"></div><div style="left:886px;top:664px;width:1px;height:175px;background:#d8d8d8"></div><div style="left:966px;top:664px;width:1px;height:175px;background:#d8d8d8"></div><div style="left:987px;top:640px;width:17px;height:203px;background:#efefef"></div><svg style="left:992px;top:671px" width="9" height="6" viewBox="0 0 9 6"><path d="M0.5 5L4.5 1L8.5 5Z" fill="#3a3a3a"/></svg><div style="left:988px;top:817px;width:15px;height:9px;background:linear-gradient(180deg,#f4f4f4,#d4d4d4);border:1px solid #909090;border-radius:2px"></div><svg style="left:992px;top:832px" width="9" height="6" viewBox="0 0 9 6"><path d="M0.5 1L4.5 5L8.5 1Z" fill="#3a3a3a"/></svg><div style="left:987px;top:843px;width:17px;height:17px;background:#f0f0f0"></div><div style="left:1004px;top:638px;width:1px;height:223px;background:#8a8a8a"></div><div style="left:6px;top:843px;width:981px;height:17px;background:#ececec"></div><svg style="left:11px;top:847px" width="6" height="10" viewBox="0 0 6 10"><path d="M5 1L1 4.5L5 8Z" fill="#2a2a2a"/></svg><div style="left:24px;top:845px;width:59px;height:14px;background:linear-gradient(180deg,#f6f6f6,#d6d6d6);border:1px solid #8a8a8a;border-radius:2px"></div><div style="left:49px;top:849px;width:1px;height:6px;background:#555"></div><div style="left:52px;top:849px;width:1px;height:6px;background:#555"></div><div style="left:55px;top:849px;width:1px;height:6px;background:#555"></div><svg style="left:976px;top:847px" width="6" height="10" viewBox="0 0 6 10"><path d="M1 1L5 4.5L1 8Z" fill="#2a2a2a"/></svg><div style="left:5px;top:860px;width:1000px;height:1px;background:#6e6e6e"></div><div style="left:3px;top:861px;width:1px;height:58px;background:#707070"></div><div style="left:413px;top:868px;width:183px;height:23px;background:linear-gradient(180deg,#f6f6f6 0%,#ebebeb 50%,#dcdcdc 51%,#d0d0d0 100%);border:1px solid #707070;border-radius:3px"></div><svg style="left:431px;top:875px" width="12" height="9" viewBox="0 0 12 9"><rect x="0" y="5" width="3" height="3" fill="#2a3ad0"/><rect x="4" y="0" width="3" height="8" fill="#2a3ad0"/><rect x="8" y="3" width="3" height="5" fill="#2a3ad0"/></svg><div class="t" style="left:446.5px;top:868.19px;font-size:11px;line-height:22px;font-weight:normal;color:#000;letter-spacing:-0.05px;">Create Track from Selection</div><svg style="left:10px;top:904px" width="12" height="9" viewBox="0 0 12 9"><rect x="0" y="5" width="3" height="3" fill="#2a3ad0"/><rect x="4" y="0" width="3" height="8" fill="#2a3ad0"/><rect x="8" y="3" width="3" height="5" fill="#2a3ad0"/></svg><div style="left:26px;top:899px;width:18px;height:18px;background:#c8c0bc;border:1px solid #3399ff"></div><svg style="left:27px;top:901px" width="16" height="13" viewBox="0 0 16 13"><rect x="0" y="0" width="16" height="13" fill="#5c5c7c"/><rect x="1" y="1" width="2" height="2" fill="#8fd870"/><rect x="4" y="1" width="5" height="2" fill="#8fd870"/><rect x="10" y="1" width="5" height="2" fill="#8fd870"/><rect x="1" y="4" width="2" height="2" fill="#8fd870"/><rect x="4" y="4" width="5" height="2" fill="#f4f8ff"/><rect x="10" y="4" width="5" height="2" fill="#f4f8ff"/><rect x="1" y="7" width="2" height="2" fill="#8fd870"/><rect x="4" y="7" width="5" height="2" fill="#f4f8ff"/><rect x="10" y="7" width="5" height="2" fill="#f4f8ff"/><rect x="1" y="10" width="2" height="2" fill="#8fd870"/><rect x="4" y="10" width="5" height="2" fill="#f4f8ff"/><rect x="10" y="10" width="5" height="2" fill="#f4f8ff"/></svg><svg style="left:49px;top:901px" width="13" height="15" viewBox="0 0 13 15"><rect x="0.7" y="0.7" width="11" height="13" fill="#fff" stroke="#3d6fa6" stroke-width="1.4"/><circle cx="6.2" cy="5.9" r="3.5" fill="none" stroke="#3d6fa6" stroke-width="1.2"/><path d="M6.2 3.9V6.2H8.2" fill="none" stroke="#3d6fa6" stroke-width="1.1"/><rect x="2.5" y="10.6" width="7.5" height="1" fill="#3d6fa6"/></svg><svg style="left:69px;top:901px" width="15" height="15" viewBox="0 0 15 15"><path d="M0.75 0.75H7.5L11.25 4.5V14.25H0.75Z" fill="#eef2f8" stroke="#3d6fa6" stroke-width="1.5"/><path d="M7.5 0.75V4.5H11.25" fill="none" stroke="#3d6fa6" stroke-width="1.3"/><path d="M5 9.5L8 13L14 1" fill="none" stroke="#1e8a2e" stroke-width="1.8"/></svg><div style="left:0px;top:919px;width:1009px;height:1px;background:#fafafa"></div><div style="left:1005px;top:861px;width:1px;height:58px;background:#e6e6e6"></div><div style="left:1006px;top:597px;width:1px;height:323px;background:#fafafa"></div>
<div style="left:0px;top:0px;width:2px;height:922px;background:linear-gradient(90deg,#5e5e5e,#9a9a9a)"></div>
</body></html>
